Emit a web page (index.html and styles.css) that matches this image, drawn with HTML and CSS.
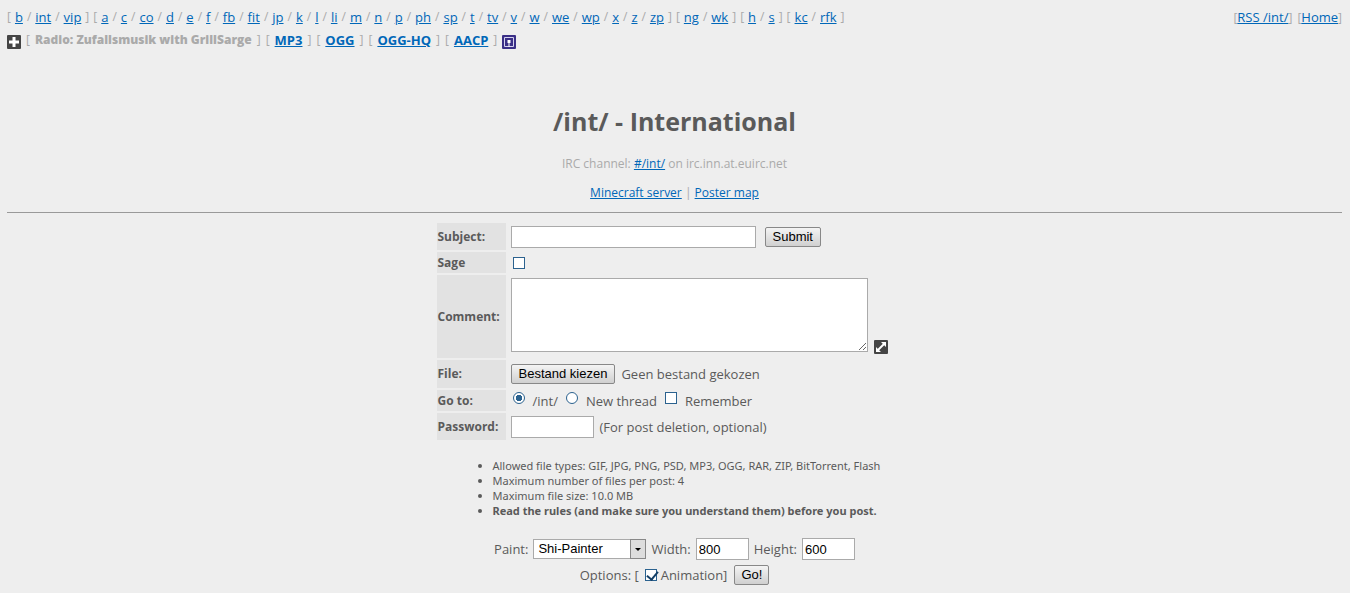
FILE: index.html
```html
<!DOCTYPE html>
<html lang="en">
<head>
<meta charset="utf-8">
<title>/int/ - International</title>
<link rel="stylesheet" href="styles.css">
</head>
<body>
<header class="topbar">
  <nav class="boards">
    <span>[</span><a href="#">b</a><span>/</span><a href="#">int</a><span>/</span><a href="#">vip</a><span>]</span>
    <span>[</span><a href="#">a</a><span>/</span><a href="#">c</a><span>/</span><a href="#">co</a><span>/</span><a href="#">d</a><span>/</span><a href="#">e</a><span>/</span><a href="#">f</a><span>/</span><a href="#">fb</a><span>/</span><a href="#">fit</a><span>/</span><a href="#">jp</a><span>/</span><a href="#">k</a><span>/</span><a href="#">l</a><span>/</span><a href="#">li</a><span>/</span><a href="#">m</a><span>/</span><a href="#">n</a><span>/</span><a href="#">p</a><span>/</span><a href="#">ph</a><span>/</span><a href="#">sp</a><span>/</span><a href="#">t</a><span>/</span><a href="#">tv</a><span>/</span><a href="#">v</a><span>/</span><a href="#">w</a><span>/</span><a href="#">we</a><span>/</span><a href="#">wp</a><span>/</span><a href="#">x</a><span>/</span><a href="#">z</a><span>/</span><a href="#">zp</a><span>]</span>
    <span>[</span><a href="#">ng</a><span>/</span><a href="#">wk</a><span>]</span>
    <span>[</span><a href="#">h</a><span>/</span><a href="#">s</a><span>]</span>
    <span>[</span><a href="#">kc</a><span>/</span><a href="#">rfk</a><span>]</span>
  </nav>
  <nav class="site-links"><span>[<a href="#">RSS /int/</a>]</span><span>[<a href="#">Home</a>]</span></nav>
</header>
<div class="radio">
  <svg class="icon" viewBox="0 0 14 14"><rect width="14" height="14" rx="1" fill="#444"/><path d="M7 2v10M2 7h10" stroke="#fff" stroke-width="3"/></svg>
  <span>[</span><b>Radio: Zufallsmusik with GrillSarge</b><span>]</span>
  <span>[</span><a href="#">MP3</a><span>]</span>
  <span>[</span><a href="#">OGG</a><span>]</span>
  <span>[</span><a href="#">OGG-HQ</a><span>]</span>
  <span>[</span><a href="#">AACP</a><span>]</span>
  <svg class="icon" viewBox="0 0 14 14"><rect width="14" height="14" rx="1" fill="#3a2f86"/><path d="M2.500 2.500h9v9h-9z" fill="none" stroke="#d5d2ee"/><path d="M5.500 5h3v3h-3zM6.500 8h1v4h-1z" fill="#fff"/></svg>
</div>
<h1>/int/ - International</h1>
<p class="intro">IRC channel: <a href="#">#/int/</a> on irc.inn.at.euirc.net</p>
<p class="intro">
  <a href="#">Minecraft server</a> | <a href="#">Poster map</a>
</p>
<hr>
<form class="post-form">
  <div class="fields">
    <label class="name" for="subject">Subject:</label>
    <div class="field row-tall"><input class="box subject" id="subject" type="text"><button class="btn" type="button">Submit</button></div>
    <label class="name" for="sage">Sage</label>
    <div class="field row-short"><input class="check" id="sage" type="checkbox"></div>
    <label class="name" for="comment">Comment:</label>
    <div class="field row-comment"><textarea class="box comment" id="comment"></textarea>
      <svg class="icon" viewBox="0 0 14 14"><rect width="14" height="14" rx="1" fill="#444"/><path d="M3 11l8-8" stroke="#fff" stroke-width="2"/><path d="M7 2h5v5zM2 7v5h5z" fill="#fff"/></svg>
    </div>
    <label class="name" for="file">File:</label>
    <div class="field row-file"><button class="btn" id="file" type="button">Bestand kiezen</button><span>Geen bestand gekozen</span></div>
    <span class="name">Go to:</span>
    <div class="field row-short goto">
      <label><input class="radio-dot" type="radio" name="goto" checked><span>/int/</span></label>
      <label><input class="radio-dot" type="radio" name="goto"><span>New thread</span></label>
      <label><input class="check" type="checkbox"><span>Remember</span></label>
    </div>
    <label class="name" for="password">Password:</label>
    <div class="field row-tall"><input class="box password" id="password" type="password"><span>(For post deletion, optional)</span></div>
  </div>
  <ul class="rules">
    <li>Allowed file types: GIF, JPG, PNG, PSD, MP3, OGG, RAR, ZIP, BitTorrent, Flash</li>
    <li>Maximum number of files per post: 4</li>
    <li>Maximum file size: 10.0 MB</li>
    <li><b>Read the rules (and make sure you understand them) before you post.</b></li>
  </ul>
  <div class="paint">
    <label for="painter">Paint:</label>
    <span class="picker"><select class="box" id="painter"><option>Shi-Painter</option></select><span class="arrow"></span></span>
    <label for="width">Width:</label><input class="box size" id="width" type="text" value="800">
    <label for="height">Height:</label><input class="box size" id="height" type="text" value="600">
  </div>
  <div class="paint options">
    <span>Options: [</span><input class="check" id="anim" type="checkbox" checked><label for="anim">Animation]</label>
    <button class="btn go" type="button">Go!</button>
  </div>
</form>
</body>
</html>
```
FILE: styles.css
```css
* { box-sizing: border-box; }
body { margin: 8px 8px 0 7px; background: #eee; color: #5a5a5a; font: 13px/18px "Open Sans", sans-serif; }
a { color: #0067b8; }
.topbar { display: flex; justify-content: space-between; color: #aaa; }
.boards { display: flex; gap: 4px; }
.boards span { font-size: 12px; }
.site-links { display: flex; gap: 5px; }
.site-links span { font-size: 12px; }
.site-links a { font-size: 13px; }
.radio { display: flex; gap: 5px; align-items: center; margin-top: 4px; color: #aaa; font-weight: bold; }
.radio > span { font-weight: normal; font-size: 12px; }
.radio b { font-size: 12px; }
.radio .icon { align-self: flex-end; }
.icon { width: 14px; height: 14px; flex: none; }
h1 { margin: 54px 0 15px; font-size: 25px; line-height: 36px; text-align: center; }
.intro { margin: 0 0 9px; text-align: center; color: #aaa; font-size: 12px; line-height: 20px; }
hr { margin: 0 0 10px; border: 0; border-top: 1px solid #999; }
.post-form { max-width: 476px; margin: 0 auto; }
.fields { display: grid; grid-template-columns: 69px 1fr; gap: 2px 5px; }
.name { display: flex; align-items: center; padding-left: 1px; background: #e2e2e2; font-weight: bold; font-size: 12px; }
.field { display: flex; align-items: center; gap: 6px; }
.row-tall { height: 27px; }
.row-short { height: 21px; }
.row-comment { height: 83px; align-items: flex-end; padding-bottom: 4px; }
.row-file { height: 28px; }
.box { border: 1px solid #aaa; border-radius: 0; background: #fff; color: #000; font: 13px/18px "Liberation Sans", sans-serif; }
input.box { height: 22px; padding: 1px 2px; }
.subject { width: 245px; margin-right: 3px; }
.comment { width: 357px; height: 74px; margin-bottom: 2px; }
.password { width: 83px; }
.btn { height: 20px; padding: 0 7px; border: 1px solid #888; border-radius: 2px; background: linear-gradient(#f4f4f4, #d0d0d0); color: #000; font: 13px/18px "Liberation Sans", sans-serif; }
.check, .radio-dot { appearance: none; flex: none; width: 12px; height: 12px; margin: 0 0 0 2px; border: 1px solid #2b628f; background: #fff; }
.check:checked::after { content: ""; display: block; width: 5px; height: 9px; margin: -1px 0 0 3px; border: solid #143f66; border-width: 0 2px 2px 0; transform: rotate(40deg); }
.radio-dot { border-radius: 50%; }
.radio-dot:checked { background: radial-gradient(circle, #2b628f 0 3px, #fff 3px); }
.goto label { display: flex; align-items: flex-end; gap: 8px; }
.goto input { align-self: flex-start; }
.rules { margin: 18px 0 0; padding-left: 56px; font: 11px/15px "Noto Sans", sans-serif; white-space: nowrap; }
.paint { display: flex; justify-content: center; align-items: center; gap: 5px; margin-top: 20px; white-space: nowrap; }
.options { gap: 4px; margin-top: 5px; }
.go { margin-left: 3px; padding: 0 6px; }
.size { width: 53px; }
.picker { display: grid; }
.picker select { appearance: none; grid-area: 1 / 1; width: 113px; height: 20px; padding: 0 4px; }
.arrow { display: flex; align-items: center; justify-content: center; grid-area: 1 / 1; justify-self: end; width: 16px; height: 20px; border: 1px solid #888; background: #ddd; pointer-events: none; }
.arrow::after { content: ""; border: 3px solid transparent; border-top-color: #000; border-bottom: 0; }
```
